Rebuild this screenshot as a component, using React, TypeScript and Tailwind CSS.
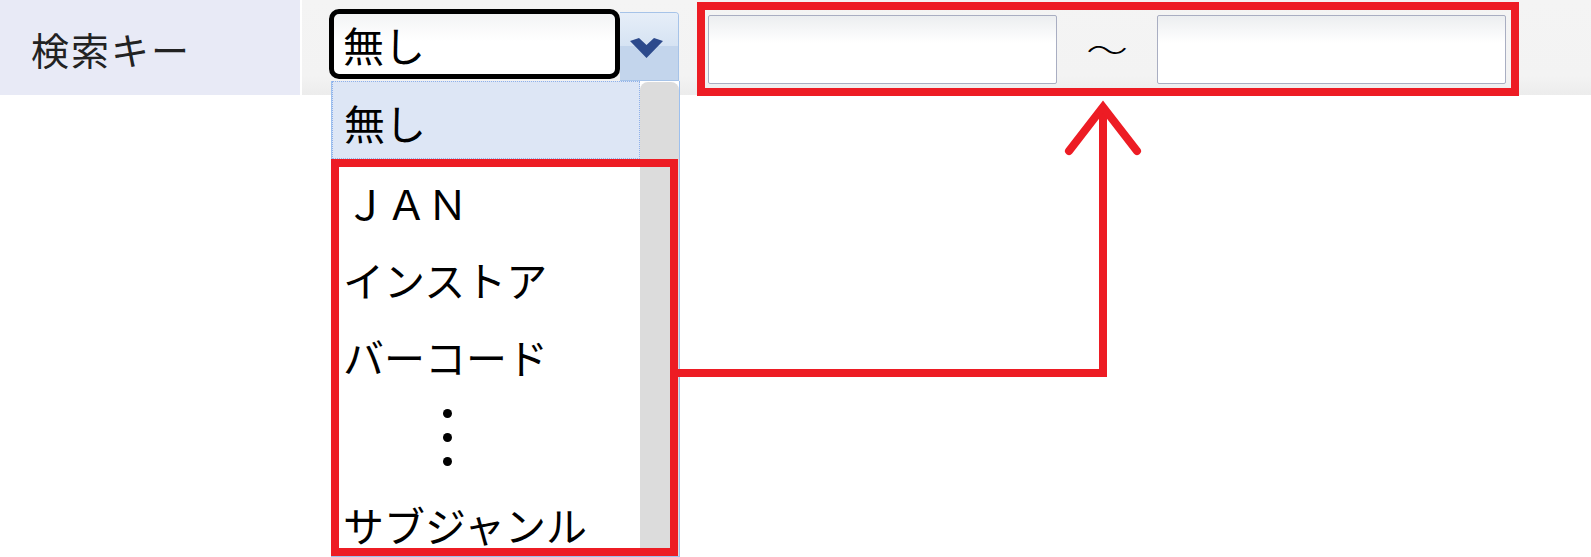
import type { ReactNode } from "react";

const jp = "font-['Noto_Sans_CJK_JP','Noto_Sans',sans-serif]";

function ListRow({ children, className = "" }: { children: ReactNode; className?: string }) {
  return <div className={`flex items-center pl-[11px] text-[41px] leading-none text-black ${className}`}>{children}</div>;
}

function ChevronDown() {
  return (
    <svg width="33" height="20" viewBox="0 0 33 20" aria-hidden>
      <polygon points="0,3 9,0 16.5,7 24,0 33,3 16.5,20" fill="#2d4a8c" />
    </svg>
  );
}

function SearchKeySelect() {
  return (
    <div className="relative flex h-full items-start">
      <div className="mt-[9px] flex h-[70px] w-[291px] items-center rounded-[10px] border-[5px] border-black bg-[linear-gradient(to_bottom,#f3f4f5,#ffffff_45%)] pl-[9px] text-[41px] leading-none text-black">
        無し
      </div>
      <div className="relative mt-[12px] flex h-[69px] w-[59px] flex-col overflow-hidden rounded-tr-[4px] border border-l-0 border-[#a6c3e8] shadow-[inset_-2px_2px_0_#f4f8fd]">
        <div className="h-[33px] bg-[linear-gradient(to_bottom,#e6eef8,#d6e3f3)]" />
        <div className="flex-1 bg-[#c3d5ec]" />
        <div className="absolute left-[10px] top-[25px]">
          <ChevronDown />
        </div>
      </div>

      {/* opened option list */}
      <div className="absolute left-[2px] top-[81px] z-10 flex h-[476px] w-[349px] border border-t-0 border-[#9dc0ee] bg-white">
        <div className="flex w-[308px] flex-col">
          <ListRow className="h-[78px] border border-dotted border-[#8fb1ea] bg-[#dde6f5] pt-[4px]">無し</ListRow>
          <ListRow className="h-[77px] pt-[10px]">
            <span className="pl-[2px]">ＪＡＮ</span>
          </ListRow>
          <ListRow className="h-[77px] pt-[10px]">インストア</ListRow>
          <ListRow className="h-[77px] pt-[10px]">バーコード</ListRow>
          <div className="flex h-[100px] flex-col items-center gap-[15px] pt-[19px] pr-[78px]">
            <span className="h-[9px] w-[9px] rounded-full bg-black" />
            <span className="h-[9px] w-[9px] rounded-full bg-black" />
            <span className="h-[9px] w-[9px] rounded-full bg-black" />
          </div>
          <ListRow className="h-[66px] pt-[2px]">サブジャンル</ListRow>
        </div>
        <div className="mt-[1px] flex-1 rounded-t-[8px] bg-[#dcdcdc]" />

        {/* annotation frame */}
        <div className="absolute left-[-1px] top-[78px] h-[397px] w-[347px] border-[8px] border-[#ed1c24]" />
      </div>
    </div>
  );
}

function RangeInputs() {
  const input =
    "h-[69px] w-[349px] rounded-[2px] border border-[#a9aec2] bg-[linear-gradient(to_bottom,#eceef0,#ffffff_40%)]";
  return (
    <div className="ml-[18px] mt-[2px] flex h-[94px] w-[822px] items-center border-[8px] border-[#ed1c24] pl-[3px]">
      <div className={input} />
      <div className="flex w-[100px] justify-center pb-[2px] text-[32px] font-light leading-none text-black">
        <span className="inline-block scale-x-[1.3]">〜</span>
      </div>
      <div className={input} />
    </div>
  );
}

export default function App() {
  return (
    <div className={`relative h-[557px] w-[1591px] overflow-hidden bg-white ${jp}`}>
      <div className="flex h-[95px]">
        <div className="flex w-[300px] items-center bg-[#e8eaf6] pl-[31px] pt-[2px] text-[38px] leading-none tracking-[2px] text-[#222]">
          検索キー
        </div>
        <div className="w-[2px] bg-white" />
        <div className="flex flex-1 bg-[linear-gradient(to_bottom,#f4f4f4,#f3f3f3_80%,#ececec)] pl-[27px]">
          <SearchKeySelect />
          <RangeInputs />
        </div>
      </div>

      {/* annotation arrow: list -> range inputs */}
      <svg className="pointer-events-none absolute inset-0 z-20" width="1591" height="557" aria-hidden>
        <polyline
          points="678,373 1103,373 1103,110"
          fill="none"
          stroke="#ed1c24"
          strokeWidth="8"
          strokeLinejoin="miter"
        />
        <polyline
          points="1069,151 1103,107 1137,151"
          fill="none"
          stroke="#ed1c24"
          strokeWidth="8"
          strokeLinecap="round"
          strokeLinejoin="miter"
        />
      </svg>
    </div>
  );
}
